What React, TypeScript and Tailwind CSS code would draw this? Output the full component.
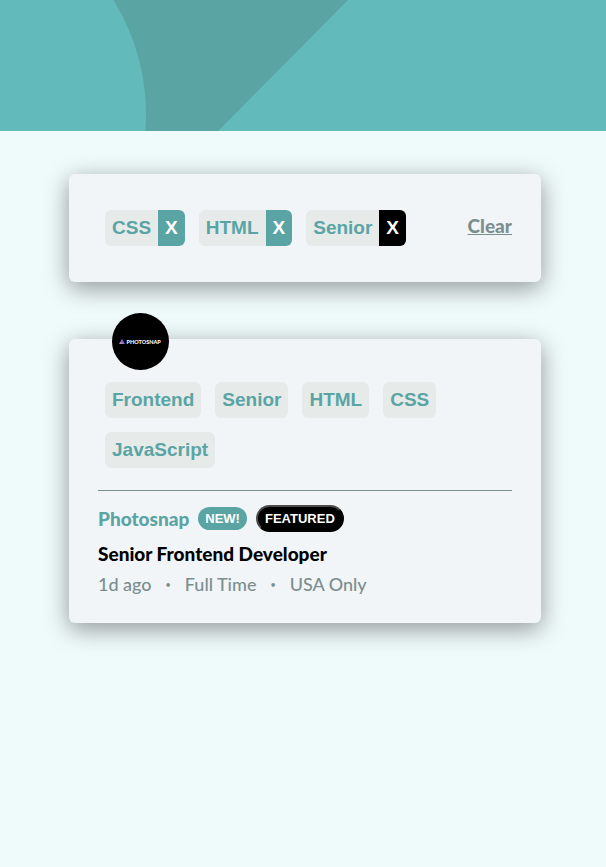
import { useState } from "react";

const chip =
  "h-9 bg-[#e6ebea] px-[7px] font-['Liberation_Sans',Arial,sans-serif] text-[19px] leading-9 font-bold text-[#5ba4a4]";
const card =
  "rounded-md bg-[#f1f5f8] shadow-[0_6px_24px_rgba(0,0,0,0.4)]";
const badge =
  "rounded-full px-[7px] font-['Liberation_Sans',Arial,sans-serif] text-[13px] leading-[23px] font-bold text-white";

function Header() {
  return (
    <header className="h-[131px] overflow-hidden bg-[#63baba]">
      <svg width="606" height="131" viewBox="0 0 606 131" aria-hidden="true">
        <path d="M113.5 0H348L218 131H145.3A216 216 0 0 0 113.5 0Z" fill="#5ba4a4" />
      </svg>
    </header>
  );
}

function Filter({ name, active, onRemove }: { name: string; active: boolean; onRemove: () => void }) {
  return (
    <li className="flex overflow-hidden rounded-md">
      <span className={chip}>{name}</span>
      <button
        type="button"
        aria-label={`Remove ${name}`}
        onClick={onRemove}
        className={`h-9 px-[7px] font-['Liberation_Sans',Arial,sans-serif] text-[19px] leading-9 font-bold text-white hover:bg-black ${active ? "bg-black" : "bg-[#5ba4a4]"}`}
      >
        X
      </button>
    </li>
  );
}

function Logo() {
  return (
    <svg
      className="absolute -top-[26px] left-[43px] size-[57px]"
      viewBox="0 0 57 57"
      role="img"
      aria-label="Photosnap logo"
    >
      <defs>
        <linearGradient id="mark" x1="0" y1="1" x2="1" y2="0">
          <stop offset="0" stopColor="#ffb18f" />
          <stop offset="0.5" stopColor="#6c62d8" />
          <stop offset="1" stopColor="#b89be8" />
        </linearGradient>
      </defs>
      <circle cx="28.5" cy="28.5" r="28.5" fill="#000" />
      <path d="M10 26L13 31H7Z" fill="url(#mark)" />
      <text
        x="14.5"
        y="30.5"
        fill="#fff"
        fontFamily="Lato, sans-serif"
        fontSize="5.5"
        fontWeight="900"
      >
        PHOTOSNAP
      </text>
    </svg>
  );
}

export default function App() {
  const [filters, setFilters] = useState(["CSS", "HTML", "Senior"]);
  const add = (name: string) =>
    setFilters((list) => (list.includes(name) ? list : [...list, name]));

  return (
    <div className="min-h-screen bg-[#effafa] font-[Lato,sans-serif]">
      <Header />
      <main className="flex flex-col gap-[57px] pt-[43px] pr-[65px] pb-10 pl-[69px]">
        <section className={`${card} flex items-center justify-between py-9 pr-[29px] pl-9`}>
          <ul className="flex flex-wrap gap-[14px]">
            {filters.map((name) => (
              <Filter
                key={name}
                name={name}
                active={name === "Senior"}
                onRemove={() => setFilters((list) => list.filter((item) => item !== name))}
              />
            ))}
          </ul>
          <button
            type="button"
            onClick={() => setFilters([])}
            className="pb-1 text-[19px] leading-6 font-black text-[#7b8e8e] underline"
          >
            Clear
          </button>
        </section>

        <article className={`${card} relative px-[29px] pt-[43px] pb-[25px]`}>
          <Logo />
          <div className="flex flex-wrap gap-[14px] px-[7px]">
            {["Frontend", "Senior", "HTML", "CSS", "JavaScript"].map((name) => (
              <button
                key={name}
                type="button"
                onClick={() => add(name)}
                className={`${chip} rounded-md`}
              >
                {name}
              </button>
            ))}
          </div>
          <hr className="mt-[22px] border-t border-[#7b8e8e]" />
          <div className="mt-[14px] flex items-center gap-[9px]">
            <h2 className="text-[19px] leading-[27px] font-black text-[#5ba4a4]">Photosnap</h2>
            <span className={`${badge} bg-[#5ba4a4]`}>NEW!</span>
            <button
              type="button"
              className={`${badge} border-2 border-t-[#4c4c4c] border-r-black border-b-black border-l-[#4c4c4c] bg-black`}
            >
              FEATURED
            </button>
          </div>
          <h3 className="mt-2 text-[19px] leading-[27px] font-black text-black">
            Senior Frontend Developer
          </h3>
          <ul className="mt-1 flex gap-[14px] text-[18px] leading-[27px] font-medium text-[#7b8e8e]">
            <li>1d ago</li>
            <li aria-hidden="true" className="text-[9px]">•</li>
            <li>Full Time</li>
            <li aria-hidden="true" className="text-[9px]">•</li>
            <li>USA Only</li>
          </ul>
        </article>
      </main>
    </div>
  );
}
